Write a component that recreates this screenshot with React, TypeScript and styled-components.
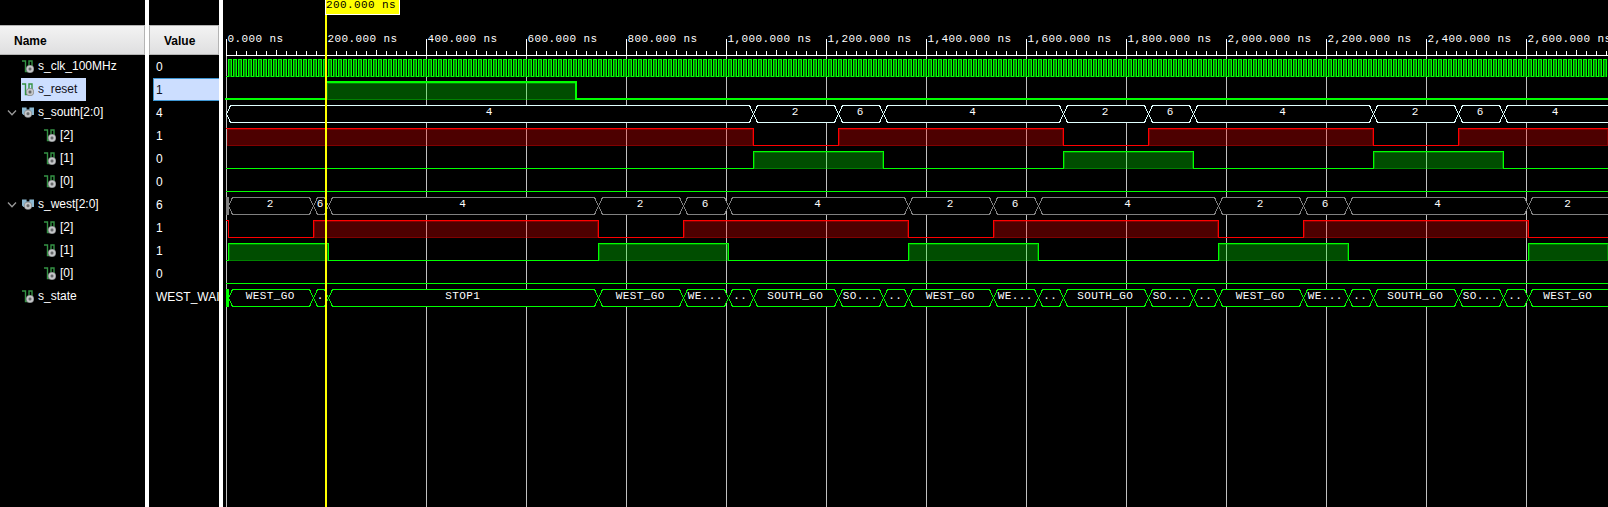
import React from 'react';
import styled, { createGlobalStyle, css } from 'styled-components';

const GlobalStyle = createGlobalStyle`
  * { box-sizing: border-box; }
  body { margin: 0; background: #000; overflow: hidden; }
`;

const WAVE_W = 1385;
const ORIGIN = 3;
const ROW_H = 23;

const Viewer = styled.div`
  display: grid;
  grid-template-columns: 145px 4px 70px 4px ${WAVE_W}px;
  width: 1608px;
  height: 507px;
  background: #000;
  overflow: hidden;
  font: 12px/23px 'Liberation Sans', Arial, sans-serif;
  color: #fff;
`;

const Column = styled.div`
  display: flex;
  flex-direction: column;
  min-width: 0;
  padding-top: 25px;
  overflow: hidden;
`;

const Splitter = styled.div`
  background: #fff;
`;

const HeaderCell = styled.div<{ $indent: number; $edge?: boolean }>`
  flex: none;
  height: 30px;
  padding: 1px 0 0 ${(p) => p.$indent}px;
  border: solid #b4b4b4;
  border-width: 1px 1px 1px ${(p) => (p.$edge ? 1 : 0)}px;
  background: linear-gradient(#f3f3f3, #dfdfe0);
  color: #000;
  font-weight: bold;
  line-height: 28px;
`;

const TreeRow = styled.div`
  display: flex;
  flex: none;
  height: ${ROW_H}px;
`;

const Twisty = styled.span`
  display: flex;
  align-items: center;
  width: 21px;
  padding: 1px 0 0 7px;
`;

const NameCell = styled.span<{ $depth: number; $selected?: boolean }>`
  display: flex;
  align-items: center;
  gap: 4px;
  margin-left: ${(p) => p.$depth * 22}px;
  padding: 0 9px 0 1px;
  line-height: 25px;
  white-space: nowrap;
  ${(p) => p.$selected && css`background: #ccdeff; color: #101018;`}
`;

const ValueCell = styled.div<{ $selected?: boolean }>`
  flex: none;
  height: ${ROW_H}px;
  margin-left: 4px;
  padding-left: 3px;
  line-height: 25px;
  white-space: nowrap;
  ${(p) =>
    p.$selected &&
    css`
      padding-left: 2px;
      border: 1px solid #3f97d3;
      border-right: 0;
      background: #ccdeff;
      color: #101018;
      line-height: 23px;
    `}
`;

const WavePane = styled.div`
  position: relative;
  display: flex;
  flex-direction: column;
  overflow: hidden;
`;

const Drawing = styled.svg`
  display: block;
  flex: none;
  position: relative;
  shape-rendering: crispEdges;
`;

const Backdrop = styled(Drawing)`
  position: absolute;
  inset: 0;
`;

const MonoText = styled.text`
  font: 11px 'Liberation Mono', 'Courier New', monospace;
  letter-spacing: 0.4px;
  fill: #fff;
  white-space: pre;
`;

const Cursor = styled.div`
  position: absolute;
  top: 0;
  left: 102px;
  width: 2px;
  height: 507px;
  background: #ff0;
`;

const CursorTag = styled.div`
  position: absolute;
  top: 0;
  left: 102px;
  width: 75px;
  height: 15px;
  border: solid #fff;
  border-width: 0 1px 1px;
  background: #ff0;
  color: #000;
  font: 11px/10px 'Liberation Mono', 'Courier New', monospace;
  letter-spacing: 0.4px;
  white-space: pre;
`;

const GREEN = '#00ff00';
const RED = '#ff0000';

const px = (ns: number) => Math.min(WAVE_W, ORIGIN + Math.floor(ns / 2));

const END = 2764;

type Span = [number, number];
type Wave =
  | { kind: 'clock' }
  | { kind: 'bit'; high: Span[]; color?: string; thick?: boolean }
  | { kind: 'bus'; color: string; marks: number[]; labels: string[]; unknown?: boolean };

interface Signal {
  name: string;
  value: string;
  depth: number;
  bus?: boolean;
  selected?: boolean;
  wave: Wave;
}

const southBit1: Span[] = [[1055, 1315], [1675, 1935], [2295, 2555]];
const westBit1: Span[] = [[5, 205], [745, 1005], [1365, 1625], [1985, 2245], [2605, END]];

const signals: Signal[] = [
  { name: 's_clk_100MHz', value: '0', depth: 0, wave: { kind: 'clock' } },
  { name: 's_reset', value: '1', depth: 0, selected: true, wave: { kind: 'bit', high: [[200, 700]], thick: true } },
  {
    name: 's_south[2:0]', value: '4', depth: 0, bus: true,
    wave: {
      kind: 'bus', color: '#e0ffff',
      marks: [0, 1055, 1225, 1315, 1675, 1845, 1935, 2295, 2465, 2555],
      labels: ['4', '2', '6', '4', '2', '6', '4', '2', '6', '4'],
    },
  },
  { name: '[2]', value: '1', depth: 1, wave: { kind: 'bit', color: RED, high: [[0, 1055], [1225, 1675], [1845, 2295], [2465, END]] } },
  { name: '[1]', value: '0', depth: 1, wave: { kind: 'bit', high: southBit1 } },
  { name: '[0]', value: '0', depth: 1, wave: { kind: 'bit', high: [] } },
  {
    name: 's_west[2:0]', value: '6', depth: 0, bus: true,
    wave: {
      kind: 'bus', color: '#808080', unknown: true,
      marks: [5, 175, 205, 745, 915, 1005, 1365, 1535, 1625, 1985, 2155, 2245, 2605],
      labels: ['2', '6', '4', '2', '6', '4', '2', '6', '4', '2', '6', '4', '2'],
    },
  },
  { name: '[2]', value: '1', depth: 1, wave: { kind: 'bit', color: RED, high: [[0, 5], [175, 745], [915, 1365], [1535, 1985], [2155, 2605]] } },
  { name: '[1]', value: '1', depth: 1, wave: { kind: 'bit', high: westBit1 } },
  { name: '[0]', value: '0', depth: 1, wave: { kind: 'bit', high: [] } },
  {
    name: 's_state', value: 'WEST_WAIT', depth: 0,
    wave: {
      kind: 'bus', color: GREEN, unknown: true,
      marks: [5, 175, 205, 745, 915, 1005, 1055, 1225, 1315, 1365, 1535, 1625, 1675, 1845, 1935, 1985, 2155, 2245, 2295, 2465, 2555, 2605],
      labels: [
        'WEST_GO', '.', 'STOP1', 'WEST_GO', 'WE...', '..', 'SOUTH_GO', 'SO...', '..', 'WEST_GO', 'WE...',
        '..', 'SOUTH_GO', 'SO...', '..', 'WEST_GO', 'WE...', '..', 'SOUTH_GO', 'SO...', '..', 'WEST_GO',
      ],
    },
  },
];

const Gear = ({ cx, cy }: { cx: number; cy: number }) => (
  <g>
    <circle cx={cx} cy={cy} r="4" fill="#8b8d8f" />
    <circle cx={cx} cy={cy} r="2.5" fill="none" stroke="#c6c8ca" strokeWidth="1.6" />
    <circle cx={cx} cy={cy} r="1.2" fill="#66686a" />
  </g>
);

const ScalarIcon = () => (
  <svg width="12" height="13" viewBox="0 0 12 13">
    <path d="M0 1H3.5V11.5H7V1H10V7" fill="none" stroke="#349244" strokeWidth="1.4" />
    <Gear cx={8} cy={9} />
  </svg>
);

const BusIcon = () => (
  <svg width="12" height="13" viewBox="0 0 12 13">
    <path d="M0 1.5H4.6V3.5H7.4V1.5H12V9H8L6 7L4 9H1.5L0 7.5Z" fill="#8db9d2" />
    <Gear cx={6} cy={7.8} />
  </svg>
);

const Chevron = () => (
  <svg width="10" height="8" viewBox="0 0 10 8">
    <path d="M1 1.5L5 5.7L9 1.5" fill="none" stroke="#9a9a9a" strokeWidth="1.3" />
  </svg>
);

const ClockWave = () => {
  let line = `M${ORIGIN} 21.5`;
  const cells: number[] = [];
  for (let x = ORIGIN + 2; x < WAVE_W; x += 5) {
    line += `H${x + 0.5}V4.5H${x + 3.5}V21.5`;
    cells.push(x);
  }
  return (
    <Drawing width={WAVE_W} height={ROW_H}>
      {cells.map((x) => (
        <rect key={x} x={x + 1} y={5} width={2} height={17} fill={GREEN} fillOpacity={0.56} />
      ))}
      <path d={line} fill="none" stroke={GREEN} />
    </Drawing>
  );
};

const BitWave = ({ high, color = GREEN, thick }: { high: Span[]; color?: string; thick?: boolean }) => {
  const off = thick ? 0 : 0.5;
  const lo = 21 + off;
  const hi = 4 + off;
  let line = `M${thick ? ORIGIN - 1 : ORIGIN} ${high[0]?.[0] === 0 ? hi : lo}`;
  high.forEach(([a, b]) => {
    if (a > 0) line += `H${px(a) + off}V${hi}`;
    line += b === END ? `H${WAVE_W}` : `H${px(b) + off}V${lo}`;
  });
  if (!high.length || high[high.length - 1][1] !== END) line += `H${WAVE_W}`;
  return (
    <Drawing width={WAVE_W} height={ROW_H}>
      {high
        .filter(([a, b]) => b - a > 10)
        .map(([a, b]) => {
          const x0 = px(a) + 1;
          const w = px(b) - x0;
          return (
            <g key={a}>
              <rect x={x0} y={5} width={w} height={17} fill={color} fillOpacity={0.3} />
              <rect x={x0 + 0.5} y={5.5} width={w - 1} height={16} fill="none" stroke={color} strokeOpacity={0.3} />
            </g>
          );
        })}
      <path d={line} fill="none" stroke={color} strokeWidth={thick ? 2 : 1} />
    </Drawing>
  );
};

const BusWave = ({ color, marks, labels, unknown }: { color: string; marks: number[]; labels: string[]; unknown?: boolean }) => (
  <Drawing width={WAVE_W} height={ROW_H}>
    {unknown && <rect x={ORIGIN} y={4} width={3} height={18} fill={color} />}
    {marks.map((m, i) => {
      const a = px(m) + 0.5;
      const last = i === marks.length - 1;
      const b = last ? WAVE_W + 10 : px(marks[i + 1]) + 0.5;
      const mid = (px(m) + (last ? WAVE_W : px(marks[i + 1]))) / 2;
      return (
        <g key={m}>
          <path
            d={`M${a} 13L${a + 4} 4.5H${b - 4}L${b} 13L${b - 4} 21.5H${a + 4}Z`}
            fill="#000"
            stroke={color}
          />
          <MonoText x={mid - 0.2} y={14} textAnchor="middle">{labels[i]}</MonoText>
        </g>
      );
    })}
  </Drawing>
);

const WaveRow = ({ wave }: { wave: Wave }) => {
  if (wave.kind === 'clock') return <ClockWave />;
  if (wave.kind === 'bit') return <BitWave {...wave} />;
  return <BusWave {...wave} />;
};

const majors = Array.from({ length: 14 }, (_, i) => i * 200);
const ticks = Array.from({ length: 139 }, (_, i) => i * 20);

const GridLines = () => (
  <Backdrop width={WAVE_W} height={507}>
    {majors.map((ns) => (
      <rect key={ns} x={px(ns)} y={56} width={1} height={451} fill="#c0c0c0" />
    ))}
  </Backdrop>
);

const Ruler = () => (
  <Drawing width={WAVE_W} height={55} overflow="visible">
    <rect x={ORIGIN} y={55} width={WAVE_W - ORIGIN} height={1} fill="#fff" />
    {ticks.map((ns) => {
      const top = ns % 200 === 0 ? 39 : ns % 100 === 0 ? 50 : 51;
      return <rect key={ns} x={px(ns)} y={top} width={1} height={55 - top} fill="#fff" />;
    })}
    {majors.map((ns) => (
      <MonoText key={ns} x={px(ns) + 1.4} y={42}>{`${ns.toLocaleString('en-US')}.000 ns`}</MonoText>
    ))}
  </Drawing>
);

export default function App() {
  return (
    <>
      <GlobalStyle />
      <Viewer>
        <Column>
          <HeaderCell $indent={14}>Name</HeaderCell>
          {signals.map((s, i) => (
            <TreeRow key={i}>
              <Twisty>{s.bus && <Chevron />}</Twisty>
              <NameCell $depth={s.depth} $selected={s.selected}>
                {s.bus ? <BusIcon /> : <ScalarIcon />}
                {s.name}
              </NameCell>
            </TreeRow>
          ))}
        </Column>
        <Splitter />
        <Column>
          <HeaderCell $indent={14} $edge>Value</HeaderCell>
          {signals.map((s, i) => (
            <ValueCell key={i} $selected={s.selected}>{s.value}</ValueCell>
          ))}
        </Column>
        <Splitter />
        <WavePane>
          <GridLines />
          <Ruler />
          {signals.map((s, i) => (
            <WaveRow key={i} wave={s.wave} />
          ))}
          <Cursor />
          <CursorTag>200.000 ns</CursorTag>
        </WavePane>
      </Viewer>
    </>
  );
}
